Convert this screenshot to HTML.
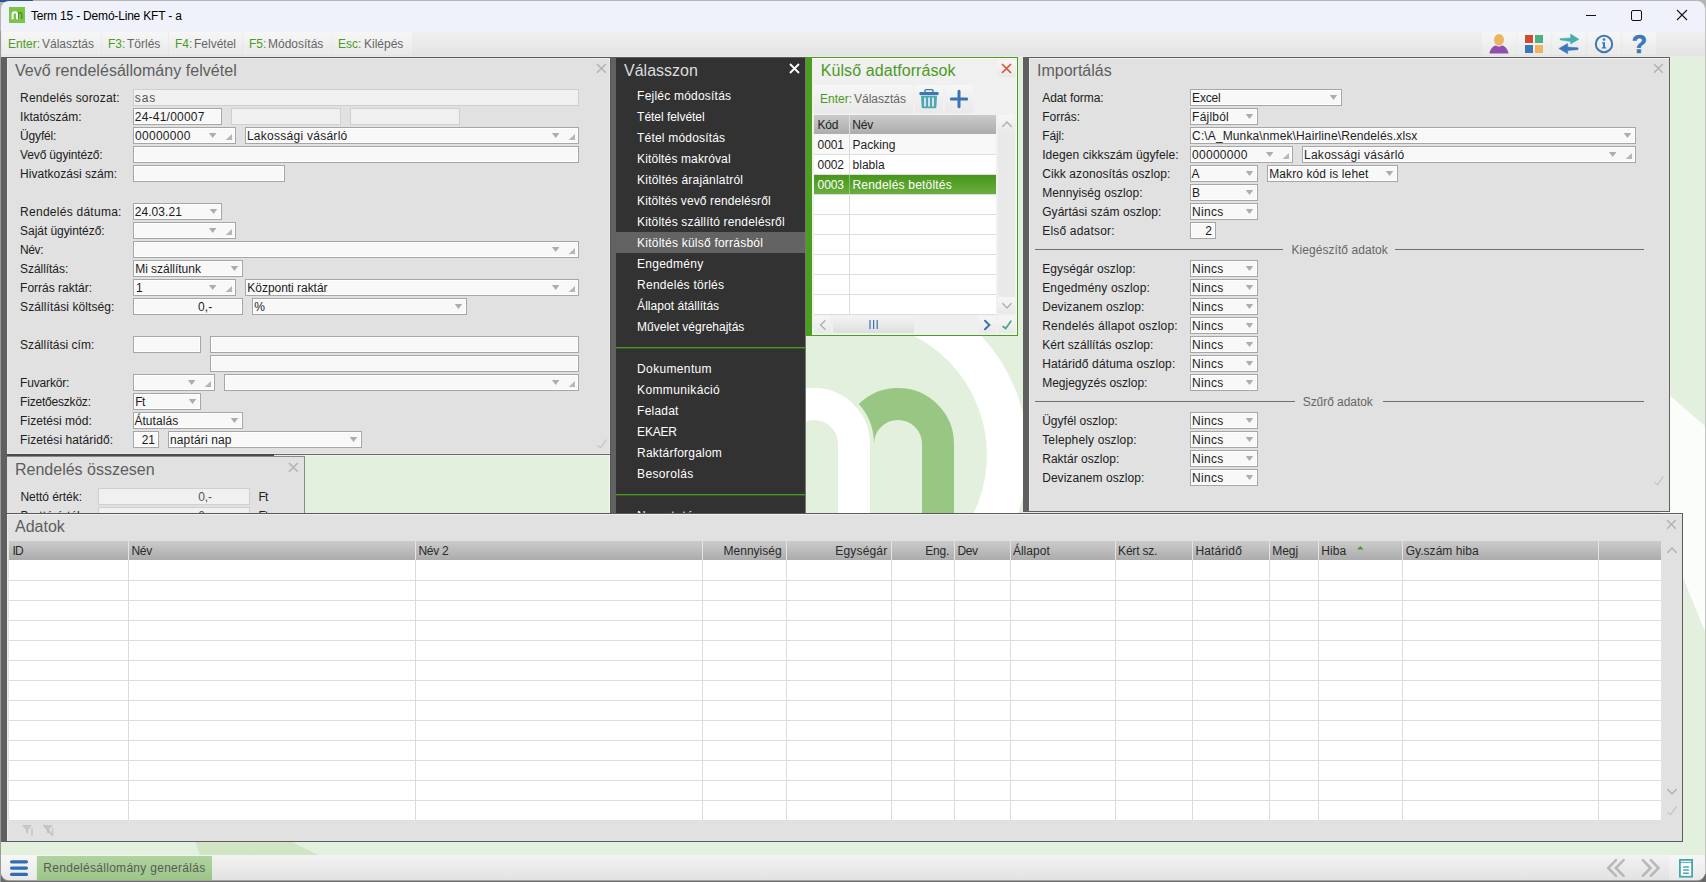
<!DOCTYPE html><html lang="hu"><head><meta charset="utf-8"><title>Term 15 - Demó-Line KFT - a</title><style>
*{box-sizing:border-box;margin:0;padding:0}
html,body{width:1706px;height:882px;overflow:hidden;background:#e4f0de;font-family:"Liberation Sans",Arial,sans-serif;font-size:12px;color:#1a1a1a}
.abs,.l,.i,.c,.pt,.x,.mi,.th,.tb{position:absolute}
.l{white-space:nowrap;line-height:14px;height:14px;letter-spacing:.17px;color:#202020}
.i{height:17px;border:1px solid #a6a6a6;background:#f8f8f8;box-shadow:inset 0 0 0 1px #fff;line-height:17px;padding-left:1px;white-space:nowrap;overflow:hidden;letter-spacing:.17px;color:#1c1c1c}
.i.d{border-color:#cfcfcf;background:#f0f0f0;color:#555;box-shadow:none}
.i.r{text-align:right;padding-right:3px;padding-left:0}
.ar{position:absolute;top:5px;width:7.6px;height:4.9px;background:#adadad;clip-path:polygon(0 0,100% 0,50% 100%)}
.cn{position:absolute;top:5.8px;width:6.8px;height:6.4px;background:#b7b7b7;clip-path:polygon(100% 0,100% 100%,0 100%)}
.pt{font-size:16px;line-height:20px;color:#5e5e5e;white-space:nowrap}
.panel{position:absolute;background:#e1e1e1}
.mi{left:637px;color:#fff;white-space:nowrap;line-height:14px;letter-spacing:.22px}
.sep{position:absolute;height:1px;background:#707070}
.th{top:0;height:20px;line-height:20px;white-space:nowrap;letter-spacing:.1px;color:#2a2a2a}
.k{color:#4b9b20}.v{color:#666}
.tb{top:31px;height:26px;line-height:26px;white-space:nowrap;font-size:12px}
.bt{position:absolute;background:linear-gradient(#f6f6f6,#e9e9e9)}
svg{position:absolute;overflow:visible}
</style></head><body>
<svg style="left:0;top:0" width="1706" height="882" viewBox="0 0 1706 882"><rect width="1706" height="882" fill="#e4f0de"/>
<circle cx="853" cy="455" r="154.5" fill="none" stroke="#fff" stroke-width="41"/>
<path d="M858 444A40 40 0 0 1 938 444V560" fill="none" stroke="#98c783" stroke-width="32"/>
<path d="M774 560V444A40 40 0 0 1 854 444V560" fill="none" stroke="#e4f0de" stroke-width="40"/>
<path d="M774 560V444A40 40 0 0 1 854 444V560" fill="none" stroke="#fff" stroke-width="32"/>
<polygon points="1660,387 1706,427 1706,634 1660,521" fill="#fbfdfa"/>
<polygon points="195,841 290,841 318,855 200,855" fill="#cfe5c4"/>
</svg>
<div class="abs" style="left:0;top:0;width:1706px;height:31px;background:#b4b4b4"></div>
<div class="abs" style="left:0;top:0;width:33px;height:2px;background:#2f5590"></div>
<div class="abs" style="left:1px;top:1px;width:1704px;height:30px;background:#eff2fa;border-radius:8px 8px 0 0"></div>
<svg style="left:9px;top:7px" width="16" height="16"><rect width="16" height="16" fill="#7dc24b"/><path d="M9 12V7.6A1.9 1.9 0 0 1 12.8 7.6V12" fill="none" stroke="#47a01f" stroke-width="1.7"/><path d="M3.6 12.3V7.4A2.2 2.2 0 0 1 8 7.4V12.3" fill="none" stroke="#fff" stroke-width="2"/></svg>
<div class="abs" style="left:31px;top:8px;line-height:16px;white-space:nowrap;color:#000;font-size:12px;letter-spacing:-.19px">Term 15 - Demó-Line KFT - a</div>
<svg style="left:1586px;top:10px" width="102" height="11"><path d="M0 5.5H10" stroke="#111" stroke-width="1"/><rect x="45.5" y="0.5" width="10" height="10" rx="1.5" fill="none" stroke="#111" stroke-width="1"/><path d="M91 0L101 10M101 0L91 10" stroke="#111" stroke-width="1.1"/></svg>
<div class="abs" style="left:1px;top:31px;width:1704px;height:26px;background:linear-gradient(#f0f0f0,#e3e3e3)"></div>
<div class="bt" style="left:2px;top:32px;width:99px;height:23px"></div>
<div class="bt" style="left:102px;top:32px;width:66px;height:23px"></div>
<div class="bt" style="left:169px;top:32px;width:73px;height:23px"></div>
<div class="bt" style="left:243px;top:32px;width:88px;height:23px"></div>
<div class="bt" style="left:332px;top:32px;width:80px;height:23px"></div>
<div class="tb k" style="left:8px">Enter:</div><div class="tb v" style="left:42px">Választás</div>
<div class="tb k" style="left:108px">F3:</div><div class="tb v" style="left:127px">Törlés</div>
<div class="tb k" style="left:175px">F4:</div><div class="tb v" style="left:194px">Felvétel</div>
<div class="tb k" style="left:249px">F5:</div><div class="tb v" style="left:268px">Módosítás</div>
<div class="tb k" style="left:338px">Esc:</div><div class="tb v" style="left:364px">Kilépés</div>
<div class="bt" style="left:1482px;top:32px;width:34px;height:23px"></div>
<div class="bt" style="left:1517px;top:32px;width:34px;height:23px"></div>
<div class="bt" style="left:1552px;top:32px;width:34px;height:23px"></div>
<div class="bt" style="left:1587px;top:32px;width:34px;height:23px"></div>
<div class="bt" style="left:1622px;top:32px;width:34px;height:23px"></div>
<svg style="left:1488px;top:33px" width="22" height="22"><path d="M1.4 20.6C2.4 16 5 13.2 8 12.6C9.6 14 12.4 14 14 12.6C17 13.2 19.6 16 20.6 20.6Z" fill="#8e4fae"/><ellipse cx="11" cy="6.8" rx="5" ry="5.8" fill="#ecb45e"/></svg>
<svg style="left:1525px;top:35px" width="18" height="18"><rect width="8" height="8" fill="#d24a2f"/><rect x="10" width="8" height="8" fill="#4cae87"/><rect y="10" width="8" height="8" fill="#3b78b8"/><rect x="10" y="10" width="8" height="8" fill="#f0b55c"/></svg>
<svg style="left:1558px;top:33px" width="22" height="22"><path d="M2.4 5.5L12.6 5V1L21 6.3L12.6 11V8.6L2.4 6.9Q1.6 6.2 2.4 5.5Z" fill="#45aeb1" stroke="#45aeb1" stroke-width=".5" stroke-linejoin="round"/><path d="M19.8 14.7L9.7 14.1V10.5L0.9 15.5L9.7 20.7V17.5L19.8 16.7Q20.7 15.7 19.8 14.7Z" fill="#3b78b8" stroke="#3b78b8" stroke-width=".5" stroke-linejoin="round"/></svg>
<svg style="left:1594px;top:34px" width="20" height="20"><circle cx="10" cy="10" r="8.2" fill="none" stroke="#3b78b8" stroke-width="2"/><circle cx="10" cy="5.6" r="1.3" fill="#3b78b8"/><path d="M8 8.2H11V13.3H12.2V14.6H7.8V13.3H9V9.5H8Z" fill="#3b78b8"/></svg>
<div class="abs" style="left:1631px;top:31px;width:17px;height:27px;line-height:27px;font-size:25px;font-weight:bold;color:#3b78b8;text-align:center;-webkit-text-stroke:.6px #3b78b8">?</div>
<div class="abs" style="left:1px;top:56px;width:1704px;height:1px;background:#e9e9e9"></div><div class="abs" style="left:1px;top:57px;width:805px;height:1px;background:#5c5c5c"></div>
<div class="abs" style="left:1px;top:58px;width:6px;height:784px;background:#606060"></div>
<div class="panel" style="left:7px;top:58px;width:603px;height:396px;border-right:1px solid #e9e9e9;border-bottom:1px solid #e9e9e9;border-top:1px solid #ebebeb;border-left:1px solid #e9e9e9"></div>
<div class="pt" style="left:15px;top:61px;letter-spacing:.04px">Vevő rendelésállomány felvétel</div>
<svg style="left:597.1px;top:64.1px" width="8.8" height="8.8"><path d="M0 0L8.8 8.8M8.8 0L0 8.8" stroke="#b4b4b4" stroke-width="1.6" fill="none"/></svg>
<svg style="left:596px;top:437.5px" width="12" height="12"><path d="M1.86 7.66L4.62 9.68L10.14 1.95" stroke="#c6c6c6" stroke-width="1.3" fill="none" stroke-linecap="round"/></svg>
<div class="l" style="left:20.1px;top:91px;letter-spacing:0.172px;">Rendelés sorozat:</div>
<div class="l" style="left:20.1px;top:110px;letter-spacing:0.002px;">Iktatószám:</div>
<div class="l" style="left:20.1px;top:129px;letter-spacing:-0.179px;">Ügyfél:</div>
<div class="l" style="left:20.1px;top:148px;letter-spacing:-0.154px;">Vevő ügyintéző:</div>
<div class="l" style="left:20.1px;top:167px;letter-spacing:0.016px;">Hivatkozási szám:</div>
<div class="l" style="left:20.1px;top:205px;letter-spacing:0.262px;">Rendelés dátuma:</div>
<div class="l" style="left:20.1px;top:224px;letter-spacing:-0.058px;">Saját ügyintéző:</div>
<div class="l" style="left:20.1px;top:243px;letter-spacing:-0.408px;">Név:</div>
<div class="l" style="left:20.1px;top:262px;letter-spacing:-0.058px;">Szállítás:</div>
<div class="l" style="left:20.1px;top:281px;letter-spacing:0.0px;">Forrás raktár:</div>
<div class="l" style="left:20.1px;top:300px;letter-spacing:0.092px;">Szállítási költség:</div>
<div class="l" style="left:20.1px;top:338px;letter-spacing:0.014px;">Szállítási cím:</div>
<div class="l" style="left:20.1px;top:376px;letter-spacing:-0.178px;">Fuvarkör:</div>
<div class="l" style="left:20.1px;top:395px;letter-spacing:-0.206px;">Fizetőeszköz:</div>
<div class="l" style="left:20.1px;top:414px;letter-spacing:0.035px;">Fizetési mód:</div>
<div class="l" style="left:20.1px;top:433px;letter-spacing:0.09px;">Fizetési határidő:</div>
<div class="i d" style="left:133px;top:89px;width:446px;"></div>
<div class="l" style="left:134.8px;top:91px;letter-spacing:0.888px;color:#555">sas</div>
<div class="i " style="left:133px;top:108px;width:89px;"></div>
<div class="l" style="left:134.8px;top:110px;letter-spacing:0.223px;color:#1c1c1c">24-41/00007</div>
<div class="i d" style="left:231px;top:108px;width:110px;"></div>
<div class="i d" style="left:350px;top:108px;width:110px;"></div>
<div class="i " style="left:133px;top:127px;width:103px;"><span class="ar" style="left:74.9px"></span><span class="cn" style="left:91.4px"></span></div>
<div class="l" style="left:135.1px;top:129px;letter-spacing:0.261px;color:#1c1c1c">00000000</div>
<div class="i " style="left:245px;top:127px;width:334px;"><span class="ar" style="left:305.9px"></span><span class="cn" style="left:322.4px"></span></div>
<div class="l" style="left:246.9px;top:129px;letter-spacing:0.269px;color:#1c1c1c">Lakossági vásárló</div>
<div class="i " style="left:133px;top:146px;width:446px;"></div>
<div class="i " style="left:133px;top:165px;width:152px;"></div>
<div class="i " style="left:133px;top:203px;width:89px;"><span class="ar" style="left:75.7px"></span></div>
<div class="l" style="left:134.7px;top:205px;letter-spacing:0.079px;color:#1c1c1c">24.03.21</div>
<div class="i " style="left:133px;top:222px;width:103px;"><span class="ar" style="left:74.9px"></span><span class="cn" style="left:91.4px"></span></div>
<div class="i " style="left:133px;top:241px;width:446px;"><span class="ar" style="left:417.9px"></span><span class="cn" style="left:434.4px"></span></div>
<div class="i " style="left:133px;top:260px;width:110px;"><span class="ar" style="left:96.7px"></span></div>
<div class="l" style="left:135.2px;top:262px;letter-spacing:-0.027px;color:#1c1c1c">Mi szállítunk</div>
<div class="i " style="left:133px;top:279px;width:103px;"><span class="ar" style="left:74.9px"></span><span class="cn" style="left:91.4px"></span></div>
<div class="l" style="left:136.0px;top:281px;letter-spacing:-1.825px;color:#1c1c1c">1</div>
<div class="i " style="left:245px;top:279px;width:334px;"><span class="ar" style="left:305.9px"></span><span class="cn" style="left:322.4px"></span></div>
<div class="l" style="left:247.3px;top:281px;letter-spacing:-0.032px;color:#1c1c1c">Központi raktár</div>
<div class="i " style="left:133px;top:298px;width:110px;"></div>
<div class="l" style="left:198.0px;top:300px;letter-spacing:0.1px;color:#1c1c1c">0,-</div>
<div class="i " style="left:252px;top:298px;width:215px;"><span class="ar" style="left:201.7px"></span></div>
<div class="l" style="left:254.3px;top:300px;letter-spacing:-0.625px;color:#1c1c1c">%</div>
<div class="i " style="left:133px;top:336px;width:68px;"></div>
<div class="i " style="left:210px;top:336px;width:369px;"></div>
<div class="i " style="left:210px;top:355px;width:369px;"></div>
<div class="i " style="left:133px;top:374px;width:82px;"><span class="ar" style="left:53.9px"></span><span class="cn" style="left:70.4px"></span></div>
<div class="i " style="left:224px;top:374px;width:355px;"><span class="ar" style="left:326.9px"></span><span class="cn" style="left:343.4px"></span></div>
<div class="i " style="left:133px;top:393px;width:68px;"><span class="ar" style="left:54.7px"></span></div>
<div class="l" style="left:135.2px;top:395px;letter-spacing:-0.425px;color:#1c1c1c">Ft</div>
<div class="i " style="left:133px;top:412px;width:110px;"><span class="ar" style="left:96.7px"></span></div>
<div class="l" style="left:134.4px;top:414px;letter-spacing:0.061px;color:#1c1c1c">Átutalás</div>
<div class="i " style="left:133px;top:431px;width:26px;"></div>
<div class="l" style="left:141.8px;top:433px;letter-spacing:-0.175px;color:#1c1c1c">21</div>
<div class="i " style="left:168px;top:431px;width:194px;"><span class="ar" style="left:180.7px"></span></div>
<div class="l" style="left:169.9px;top:433px;letter-spacing:0.16px;color:#1c1c1c">naptári nap</div>
<div class="abs" style="left:7px;top:454px;width:603px;height:1px;background:#666"></div><div class="abs" style="left:7px;top:454px;width:267px;height:2px;background:#4a4a4a"></div><div class="abs" style="left:609px;top:455px;width:1px;height:58px;background:#f1faec"></div><div class="abs" style="left:305px;top:455px;width:304px;height:1px;background:#eef8e9"></div>
<div class="panel" style="left:7px;top:456px;width:298px;height:57px;border-top:1px solid #8a8a8a;border-right:1px solid #8a8a8a;overflow:hidden">
<div class="pt" style="left:8px;top:3px">Rendelés összesen</div>
<div class="l" style="left:13.4px;top:33px;letter-spacing:-0.036px">Nettó érték:</div><div class="i d" style="left:91px;top:31px;width:152px"></div>
<div class="l" style="left:191.3px;top:33px;letter-spacing:-0.15px;color:#555">0,-</div>
<div class="l" style="left:251.5px;top:33px;letter-spacing:-0.825px">Ft</div>
<div class="l" style="left:13.4px;top:52px;letter-spacing:0.06px">Bruttó érték:</div><div class="i d" style="left:91px;top:50px;width:152px"></div>
<div class="l" style="left:191.3px;top:52px;letter-spacing:-0.15px;color:#555">0,-</div>
<div class="l" style="left:251.5px;top:52px;letter-spacing:-0.825px">Ft</div>
</div>
<svg style="left:289.1px;top:463.1px" width="8.8" height="8.8"><path d="M0 0L8.8 8.8M8.8 0L0 8.8" stroke="#b4b4b4" stroke-width="1.6" fill="none"/></svg>
<div class="abs" style="left:610px;top:58px;width:6px;height:455px;background:#616161;border-left:1px solid #565656"></div>
<div class="abs" style="left:616px;top:58px;width:190px;height:455px;background:#323232;border-right:1px solid #777;overflow:hidden">
<div class="pt" style="left:8px;top:3px;color:#dcdcdc">Válasszon</div>
<div class="abs" style="left:0;top:174px;width:189px;height:21px;background:#636363"></div>
<div class="mi" style="left:21.1px;top:31px;letter-spacing:0.217px">Fejléc módosítás</div>
<div class="mi" style="left:21.1px;top:52px;letter-spacing:-0.038px">Tétel felvétel</div>
<div class="mi" style="left:21.1px;top:73px;letter-spacing:0.188px">Tétel módosítás</div>
<div class="mi" style="left:21.1px;top:94px;letter-spacing:0.133px">Kitöltés makróval</div>
<div class="mi" style="left:21.1px;top:115px;letter-spacing:0.19px">Kitöltés árajánlatról</div>
<div class="mi" style="left:21.1px;top:136px;letter-spacing:0.115px">Kitöltés vevő rendelésről</div>
<div class="mi" style="left:21.1px;top:157px;letter-spacing:0.17px">Kitöltés szállító rendelésről</div>
<div class="mi" style="left:21.1px;top:178px;letter-spacing:0.22px">Kitöltés külső forrásból</div>
<div class="mi" style="left:21.1px;top:199px;letter-spacing:0.25px">Engedmény</div>
<div class="mi" style="left:21.1px;top:220px;letter-spacing:0.252px">Rendelés törlés</div>
<div class="mi" style="left:21.1px;top:241px;letter-spacing:0.039px">Állapot átállítás</div>
<div class="mi" style="left:21.1px;top:262px;letter-spacing:-0.01px">Művelet végrehajtás</div>
<div class="abs" style="left:0;top:289px;width:189px;height:1px;background:#4a9a1e"></div><div class="abs" style="left:0;top:290px;width:189px;height:1px;background:rgba(74,154,30,.35)"></div>
<div class="mi" style="left:21.1px;top:304px;letter-spacing:0.347px">Dokumentum</div>
<div class="mi" style="left:21.1px;top:325px;letter-spacing:0.359px">Kommunikáció</div>
<div class="mi" style="left:21.1px;top:346px;letter-spacing:0.217px">Feladat</div>
<div class="mi" style="left:21.1px;top:367px;letter-spacing:-0.206px">EKAER</div>
<div class="mi" style="left:21.1px;top:388px;letter-spacing:0.208px">Raktárforgalom</div>
<div class="mi" style="left:21.1px;top:409px;letter-spacing:0.353px">Besorolás</div>
<div class="abs" style="left:0;top:436px;width:189px;height:1px;background:#4a9a1e"></div><div class="abs" style="left:0;top:437px;width:189px;height:1px;background:rgba(74,154,30,.35)"></div>
<div class="mi" style="left:21.1px;top:451px;letter-spacing:0.691px">Nyomtatás</div>
</div>
<svg style="left:790.0px;top:64.0px" width="9.0" height="9.0"><path d="M0 0L9.0 9.0M9.0 0L0 9.0" stroke="#fff" stroke-width="1.8" fill="none"/></svg>
<div class="abs" style="left:806px;top:57px;width:212px;height:279px;background:#4c9e1e"></div>
<div class="panel" style="left:812px;top:58px;width:205px;height:277px;background:#f0f0f0;overflow:hidden;box-shadow:inset 0 1px #fbfbfb,inset -1px 0 #f8f8f8">
<div class="pt" style="left:8.7px;top:3px;color:#4b9b20;letter-spacing:0.088px">Külső adatforrások</div>
<div class="bt" style="left:186px;top:2px;width:18px;height:17px"></div>
<div class="bt" style="left:2px;top:27px;width:99px;height:28px"></div>
<div class="abs k" style="left:8px;top:27px;line-height:28px;white-space:nowrap">Enter:</div><div class="abs v" style="left:42px;top:27px;line-height:28px;white-space:nowrap">Választás</div>
<div class="bt" style="left:103px;top:27px;width:28px;height:28px"></div>
<div class="bt" style="left:133px;top:27px;width:28px;height:28px"></div>
<svg style="left:107px;top:30px" width="20" height="21"><path d="M6 4V2.6Q6 1.6 7 1.6H13Q14 1.6 14 2.6V4" fill="none" stroke="#3d76b5" stroke-width="1.4"/><rect x="0.3" y="4" width="19.4" height="3.2" rx="1.4" fill="#3d76b5"/><path d="M2 8H18L17.4 19Q17.3 20.3 16 20.3H4Q2.7 20.3 2.6 19Z" fill="#4fa8b0"/><path d="M6 9.5V18.5M10 9.5V18.5M14 9.5V18.5" stroke="#f3f3f3" stroke-width="1.6"/></svg>
<svg style="left:137px;top:31px" width="20" height="20"><path d="M2.3 10H17.7M10 2.3V17.7" stroke="#3b73b4" stroke-width="3" stroke-linecap="round"/></svg>
<div class="abs" style="left:2px;top:57px;width:182px;height:199px;background:#fff"></div>
<div class="abs" style="left:2px;top:57px;width:182px;height:19px;background:linear-gradient(#cbcbcb,#acacac)"></div>
<div class="abs" style="left:2px;top:76px;width:182px;height:20px;background:#f8f8f8"></div>
<div class="abs" style="left:37px;top:57px;width:1px;height:199px;background:#dcdcdc"></div>
<div class="l" style="left:5.5px;top:60px;letter-spacing:-0.188px;color:#222">Kód</div>
<div class="l" style="left:40.3px;top:60px;letter-spacing:-0.237px;color:#222">Név</div>
<div class="abs" style="left:2px;top:96px;width:182px;height:1px;background:#dedede"></div>
<div class="abs" style="left:2px;top:116px;width:182px;height:1px;background:#dedede"></div>
<div class="abs" style="left:2px;top:136px;width:182px;height:1px;background:#dedede"></div>
<div class="abs" style="left:2px;top:156px;width:182px;height:1px;background:#dedede"></div>
<div class="abs" style="left:2px;top:176px;width:182px;height:1px;background:#dedede"></div>
<div class="abs" style="left:2px;top:196px;width:182px;height:1px;background:#dedede"></div>
<div class="abs" style="left:2px;top:216px;width:182px;height:1px;background:#dedede"></div>
<div class="abs" style="left:2px;top:236px;width:182px;height:1px;background:#dedede"></div>
<div class="abs" style="left:2px;top:256px;width:182px;height:1px;background:#dedede"></div>
<div class="abs" style="left:2px;top:117px;width:182px;height:19px;background:linear-gradient(#47961b,#6aae40)"></div>
<div class="abs" style="left:37px;top:117px;width:1px;height:19px;background:#8cc46a"></div>
<div class="l" style="left:5.6px;top:80px;letter-spacing:-0.117px;color:#222">0001</div>
<div class="l" style="left:40.5px;top:80px;letter-spacing:0.042px;color:#222">Packing</div>
<div class="l" style="left:5.6px;top:100px;letter-spacing:-0.117px;color:#222">0002</div>
<div class="l" style="left:40.5px;top:100px;letter-spacing:0.035px;color:#222">blabla</div>
<div class="l" style="left:5.6px;top:120px;letter-spacing:-0.117px;color:#fff">0003</div>
<div class="l" style="left:40.5px;top:120px;letter-spacing:0.192px;color:#fff">Rendelés betöltés</div>
<div class="abs" style="left:186px;top:57px;width:17px;height:199px;background:#e9e9e9"></div>
<div class="bt" style="left:186px;top:57px;width:17px;height:18px"></div>
<div class="bt" style="left:186px;top:239px;width:17px;height:17px"></div>
<div class="abs" style="left:2px;top:258px;width:182px;height:17px;background:#efefef"></div>
<div class="bt" style="left:2px;top:258px;width:17px;height:17px"></div>
<div class="abs" style="left:21px;top:258px;width:81px;height:17px;background:linear-gradient(#f4f4f4,#dedede)"></div>
<div class="bt" style="left:167px;top:258px;width:17px;height:17px"></div>
<div class="bt" style="left:186px;top:258px;width:17px;height:17px"></div>
<svg style="left:57px;top:262px" width="10" height="10"><path d="M1 0V9M4.6 0V9M8.2 0V9" stroke="#3b73b4" stroke-width="1.2"/></svg>
</div>
<svg style="left:1002.0px;top:64.0px" width="9.0" height="9.0"><path d="M0 0L9.0 9.0M9.0 0L0 9.0" stroke="#d9553a" stroke-width="1.7" fill="none"/></svg>
<svg style="left:1006.5px;top:124px" width="1" height="1"><path d="M-4.3 2.4L0 -2L4.3 2.4" stroke="#b0b0b0" stroke-width="1.4" fill="none" stroke-linecap="round"/></svg>
<svg style="left:1006.5px;top:305.6px" width="1" height="1"><path d="M-4.3 -2.4L0 2L4.3 -2.4" stroke="#b0b0b0" stroke-width="1.4" fill="none" stroke-linecap="round"/></svg>
<svg style="left:822.8px;top:324.7px" width="1" height="1"><path d="M2 -4.3L-2.4 0L2 4.3" stroke="#b0b0b0" stroke-width="1.4" fill="none" stroke-linecap="round"/></svg>
<svg style="left:987px;top:324.7px" width="1" height="1"><path d="M-2 -4.3L2.4 0L-2 4.3" stroke="#3b73b4" stroke-width="2" fill="none" stroke-linecap="round"/></svg>
<svg style="left:1000.5px;top:318.6px" width="12" height="12"><path d="M2.13 7.55L4.71 9.44L9.87 2.22" stroke="#4aa77a" stroke-width="1.7" fill="none" stroke-linecap="round"/></svg>
<div class="abs" style="left:1023px;top:57px;width:647px;height:455px;background:#606060"></div>
<div class="panel" style="left:1029px;top:58px;width:640px;height:453px;border-top:1px solid #f2f2f2;border-left:1px solid #ececec"></div>
<div class="pt" style="left:1037px;top:61px;">Importálás</div>
<svg style="left:1654.1px;top:64.1px" width="8.8" height="8.8"><path d="M0 0L8.8 8.8M8.8 0L0 8.8" stroke="#b4b4b4" stroke-width="1.6" fill="none"/></svg>
<svg style="left:1652.5px;top:475px" width="12" height="12"><path d="M1.86 7.66L4.62 9.68L10.14 1.95" stroke="#c6c6c6" stroke-width="1.3" fill="none" stroke-linecap="round"/></svg>
<div class="l" style="left:1042.2px;top:91px;letter-spacing:-0.06px;">Adat forma:</div>
<div class="l" style="left:1042.2px;top:110px;letter-spacing:-0.017px;">Forrás:</div>
<div class="l" style="left:1042.2px;top:129px;letter-spacing:-0.106px;">Fájl:</div>
<div class="l" style="left:1042.2px;top:148px;letter-spacing:0.067px;">Idegen cikkszám ügyfele:</div>
<div class="l" style="left:1042.2px;top:167px;letter-spacing:0.091px;">Cikk azonosítás oszlop:</div>
<div class="l" style="left:1042.2px;top:186px;letter-spacing:0.064px;">Mennyiség oszlop:</div>
<div class="l" style="left:1042.2px;top:205px;letter-spacing:0.055px;">Gyártási szám oszlop:</div>
<div class="l" style="left:1042.2px;top:224px;letter-spacing:0.2px;">Első adatsor:</div>
<div class="l" style="left:1042.2px;top:262px;letter-spacing:0.087px;">Egységár oszlop:</div>
<div class="l" style="left:1042.2px;top:281px;letter-spacing:0.139px;">Engedmény oszlop:</div>
<div class="l" style="left:1042.2px;top:300px;letter-spacing:0.045px;">Devizanem oszlop:</div>
<div class="l" style="left:1042.2px;top:319px;letter-spacing:0.207px;">Rendelés állapot oszlop:</div>
<div class="l" style="left:1042.2px;top:338px;letter-spacing:0.057px;">Kért szállítás oszlop:</div>
<div class="l" style="left:1042.2px;top:357px;letter-spacing:0.135px;">Határidő dátuma oszlop:</div>
<div class="l" style="left:1042.2px;top:376px;letter-spacing:-0.01px;">Megjegyzés oszlop:</div>
<div class="l" style="left:1042.2px;top:414px;letter-spacing:0.01px;">Ügyfél oszlop:</div>
<div class="l" style="left:1042.2px;top:433px;letter-spacing:0.144px;">Telephely oszlop:</div>
<div class="l" style="left:1042.2px;top:452px;letter-spacing:0.027px;">Raktár oszlop:</div>
<div class="l" style="left:1042.2px;top:471px;letter-spacing:0.045px;">Devizanem oszlop:</div>
<div class="i " style="left:1190px;top:89px;width:152px;"><span class="ar" style="left:138.7px"></span></div>
<div class="l" style="left:1192.1px;top:91px;letter-spacing:-0.219px;color:#1c1c1c">Excel</div>
<div class="i " style="left:1190px;top:108px;width:68px;"><span class="ar" style="left:54.7px"></span></div>
<div class="l" style="left:1192.1px;top:110px;letter-spacing:0.221px;color:#1c1c1c">Fájlból</div>
<div class="i " style="left:1190px;top:127px;width:446px;"><span class="ar" style="left:432.7px"></span></div>
<div class="l" style="left:1192.1px;top:129px;letter-spacing:0.12px;color:#1c1c1c">C:\A_Munka\nmek\Hairline\Rendelés.xlsx</div>
<div class="i " style="left:1190px;top:146px;width:103px;"><span class="ar" style="left:74.9px"></span><span class="cn" style="left:91.4px"></span></div>
<div class="l" style="left:1192.1px;top:148px;letter-spacing:0.261px;color:#1c1c1c">00000000</div>
<div class="i " style="left:1302px;top:146px;width:334px;"><span class="ar" style="left:305.9px"></span><span class="cn" style="left:322.4px"></span></div>
<div class="l" style="left:1304.0px;top:148px;letter-spacing:0.263px;color:#1c1c1c">Lakossági vásárló</div>
<div class="i " style="left:1190px;top:165px;width:68px;"><span class="ar" style="left:54.7px"></span></div>
<div class="l" style="left:1191.6px;top:167px;letter-spacing:0.0px;color:#1c1c1c">A</div>
<div class="i " style="left:1267px;top:165px;width:131px;"><span class="ar" style="left:117.7px"></span></div>
<div class="l" style="left:1269.2px;top:167px;letter-spacing:0.101px;color:#1c1c1c">Makro kód is lehet</div>
<div class="i " style="left:1190px;top:184px;width:68px;"><span class="ar" style="left:54.7px"></span></div>
<div class="l" style="left:1192.1px;top:186px;letter-spacing:-0.5px;color:#1c1c1c">B</div>
<div class="i " style="left:1190px;top:203px;width:68px;"><span class="ar" style="left:54.7px"></span></div>
<div class="l" style="left:1192.1px;top:205px;letter-spacing:0.275px;color:#1c1c1c">Nincs</div>
<div class="i " style="left:1190px;top:222px;width:26px;"></div>
<div class="l" style="left:1205.2px;top:224px;letter-spacing:0.975px;color:#1c1c1c">2</div>
<div class="i " style="left:1190px;top:260px;width:68px;"><span class="ar" style="left:54.7px"></span></div>
<div class="l" style="left:1192.1px;top:262px;letter-spacing:0.275px;color:#1c1c1c">Nincs</div>
<div class="i " style="left:1190px;top:279px;width:68px;"><span class="ar" style="left:54.7px"></span></div>
<div class="l" style="left:1192.1px;top:281px;letter-spacing:0.275px;color:#1c1c1c">Nincs</div>
<div class="i " style="left:1190px;top:298px;width:68px;"><span class="ar" style="left:54.7px"></span></div>
<div class="l" style="left:1192.1px;top:300px;letter-spacing:0.275px;color:#1c1c1c">Nincs</div>
<div class="i " style="left:1190px;top:317px;width:68px;"><span class="ar" style="left:54.7px"></span></div>
<div class="l" style="left:1192.1px;top:319px;letter-spacing:0.275px;color:#1c1c1c">Nincs</div>
<div class="i " style="left:1190px;top:336px;width:68px;"><span class="ar" style="left:54.7px"></span></div>
<div class="l" style="left:1192.1px;top:338px;letter-spacing:0.275px;color:#1c1c1c">Nincs</div>
<div class="i " style="left:1190px;top:355px;width:68px;"><span class="ar" style="left:54.7px"></span></div>
<div class="l" style="left:1192.1px;top:357px;letter-spacing:0.275px;color:#1c1c1c">Nincs</div>
<div class="i " style="left:1190px;top:374px;width:68px;"><span class="ar" style="left:54.7px"></span></div>
<div class="l" style="left:1192.1px;top:376px;letter-spacing:0.275px;color:#1c1c1c">Nincs</div>
<div class="i " style="left:1190px;top:412px;width:68px;"><span class="ar" style="left:54.7px"></span></div>
<div class="l" style="left:1192.1px;top:414px;letter-spacing:0.275px;color:#1c1c1c">Nincs</div>
<div class="i " style="left:1190px;top:431px;width:68px;"><span class="ar" style="left:54.7px"></span></div>
<div class="l" style="left:1192.1px;top:433px;letter-spacing:0.275px;color:#1c1c1c">Nincs</div>
<div class="i " style="left:1190px;top:450px;width:68px;"><span class="ar" style="left:54.7px"></span></div>
<div class="l" style="left:1192.1px;top:452px;letter-spacing:0.275px;color:#1c1c1c">Nincs</div>
<div class="i " style="left:1190px;top:469px;width:68px;"><span class="ar" style="left:54.7px"></span></div>
<div class="l" style="left:1192.1px;top:471px;letter-spacing:0.275px;color:#1c1c1c">Nincs</div>
<div class="sep" style="left:1035px;top:249px;width:248px"></div><div class="sep" style="left:1395px;top:249px;width:249px"></div>
<div class="l" style="left:1291.4px;top:243px;letter-spacing:0.062px;color:#666">Kiegészítő adatok</div>
<div class="sep" style="left:1035px;top:401px;width:260px"></div><div class="sep" style="left:1383px;top:401px;width:261px"></div>
<div class="l" style="left:1302.7px;top:395px;letter-spacing:-0.052px;color:#666">Szűrő adatok</div>
<div class="abs" style="left:7px;top:513px;width:1676px;height:329px;background:#5a5a5a"></div>
<div class="panel" style="left:7px;top:514px;width:1675px;height:327px;border-top:1px solid #f0f0f0;border-left:1px solid #ececec"></div>
<div class="pt" style="left:15px;top:517px;">Adatok</div>
<svg style="left:1667.1px;top:520.1px" width="8.8" height="8.8"><path d="M0 0L8.8 8.8M8.8 0L0 8.8" stroke="#b4b4b4" stroke-width="1.6" fill="none"/></svg>
<svg style="left:1671.5px;top:549.5px" width="1" height="1"><path d="M-4.3 2.4L0 -2L4.3 2.4" stroke="#b0b0b0" stroke-width="1.4" fill="none" stroke-linecap="round"/></svg>
<svg style="left:1671.5px;top:791.5px" width="1" height="1"><path d="M-4.3 -2.4L0 2L4.3 -2.4" stroke="#b0b0b0" stroke-width="1.4" fill="none" stroke-linecap="round"/></svg>
<svg style="left:1665.5px;top:805px" width="12" height="12"><path d="M1.86 7.66L4.62 9.68L10.14 1.95" stroke="#c6c6c6" stroke-width="1.3" fill="none" stroke-linecap="round"/></svg>
<div class="abs" style="left:9px;top:541px;width:1652px;height:279px;background:#fff"></div>
<div class="abs" style="left:9px;top:541px;width:1652px;height:19px;background:linear-gradient(#cbcbcb,#acacac)"></div>
<div class="l" style="left:12.4px;top:544px;letter-spacing:-0.7px;color:#2a2a2a">ID</div>
<div class="abs" style="left:128px;top:541px;width:1px;height:19px;background:#e4e4e4"></div>
<div class="abs" style="left:128px;top:560px;width:1px;height:260px;background:#dcdcdc"></div>
<div class="l" style="left:131.5px;top:544px;letter-spacing:-0.338px;color:#2a2a2a">Név</div>
<div class="abs" style="left:415px;top:541px;width:1px;height:19px;background:#e4e4e4"></div>
<div class="abs" style="left:415px;top:560px;width:1px;height:260px;background:#dcdcdc"></div>
<div class="l" style="left:418.4px;top:544px;letter-spacing:-0.294px;color:#2a2a2a">Név 2</div>
<div class="abs" style="left:702px;top:541px;width:1px;height:19px;background:#e4e4e4"></div>
<div class="abs" style="left:702px;top:560px;width:1px;height:260px;background:#dcdcdc"></div>
<div class="l" style="left:723.5px;top:544px;letter-spacing:0.013px;color:#2a2a2a">Mennyiség</div>
<div class="abs" style="left:786px;top:541px;width:1px;height:19px;background:#e4e4e4"></div>
<div class="abs" style="left:786px;top:560px;width:1px;height:260px;background:#dcdcdc"></div>
<div class="l" style="left:835.2px;top:544px;letter-spacing:0.193px;color:#2a2a2a">Egységár</div>
<div class="abs" style="left:891px;top:541px;width:1px;height:19px;background:#e4e4e4"></div>
<div class="abs" style="left:891px;top:560px;width:1px;height:260px;background:#dcdcdc"></div>
<div class="l" style="left:925.2px;top:544px;letter-spacing:-0.208px;color:#2a2a2a">Eng.</div>
<div class="abs" style="left:954px;top:541px;width:1px;height:19px;background:#e4e4e4"></div>
<div class="abs" style="left:954px;top:560px;width:1px;height:260px;background:#dcdcdc"></div>
<div class="l" style="left:957.5px;top:544px;letter-spacing:-0.387px;color:#2a2a2a">Dev</div>
<div class="abs" style="left:1010px;top:541px;width:1px;height:19px;background:#e4e4e4"></div>
<div class="abs" style="left:1010px;top:560px;width:1px;height:260px;background:#dcdcdc"></div>
<div class="l" style="left:1012.9px;top:544px;letter-spacing:0.025px;color:#2a2a2a">Állapot</div>
<div class="abs" style="left:1115px;top:541px;width:1px;height:19px;background:#e4e4e4"></div>
<div class="abs" style="left:1115px;top:560px;width:1px;height:260px;background:#dcdcdc"></div>
<div class="l" style="left:1118.1px;top:544px;letter-spacing:-0.204px;color:#2a2a2a">Kért sz.</div>
<div class="abs" style="left:1192px;top:541px;width:1px;height:19px;background:#e4e4e4"></div>
<div class="abs" style="left:1192px;top:560px;width:1px;height:260px;background:#dcdcdc"></div>
<div class="l" style="left:1195.4px;top:544px;letter-spacing:0.161px;color:#2a2a2a">Határidő</div>
<div class="abs" style="left:1269px;top:541px;width:1px;height:19px;background:#e4e4e4"></div>
<div class="abs" style="left:1269px;top:560px;width:1px;height:260px;background:#dcdcdc"></div>
<div class="l" style="left:1272.3px;top:544px;letter-spacing:-0.067px;color:#2a2a2a">Megj</div>
<div class="abs" style="left:1318px;top:541px;width:1px;height:19px;background:#e4e4e4"></div>
<div class="abs" style="left:1318px;top:560px;width:1px;height:260px;background:#dcdcdc"></div>
<div class="l" style="left:1321.3px;top:544px;letter-spacing:0.083px;color:#2a2a2a">Hiba</div>
<div class="abs" style="left:1402px;top:541px;width:1px;height:19px;background:#e4e4e4"></div>
<div class="abs" style="left:1402px;top:560px;width:1px;height:260px;background:#dcdcdc"></div>
<div class="l" style="left:1405.7px;top:544px;letter-spacing:0.036px;color:#2a2a2a">Gy.szám hiba</div>
<div class="abs" style="left:1598px;top:541px;width:1px;height:19px;background:#e4e4e4"></div>
<div class="abs" style="left:1598px;top:560px;width:1px;height:260px;background:#dcdcdc"></div>
<div class="abs" style="left:9px;top:580px;width:1652px;height:1px;background:#dedede"></div>
<div class="abs" style="left:9px;top:600px;width:1652px;height:1px;background:#dedede"></div>
<div class="abs" style="left:9px;top:620px;width:1652px;height:1px;background:#dedede"></div>
<div class="abs" style="left:9px;top:640px;width:1652px;height:1px;background:#dedede"></div>
<div class="abs" style="left:9px;top:660px;width:1652px;height:1px;background:#dedede"></div>
<div class="abs" style="left:9px;top:680px;width:1652px;height:1px;background:#dedede"></div>
<div class="abs" style="left:9px;top:700px;width:1652px;height:1px;background:#dedede"></div>
<div class="abs" style="left:9px;top:720px;width:1652px;height:1px;background:#dedede"></div>
<div class="abs" style="left:9px;top:740px;width:1652px;height:1px;background:#dedede"></div>
<div class="abs" style="left:9px;top:760px;width:1652px;height:1px;background:#dedede"></div>
<div class="abs" style="left:9px;top:780px;width:1652px;height:1px;background:#dedede"></div>
<div class="abs" style="left:9px;top:800px;width:1652px;height:1px;background:#dedede"></div>
<div class="abs" style="left:9px;top:820px;width:1652px;height:1px;background:#dedede"></div>
<svg style="left:1357px;top:545.6px" width="7" height="4"><path d="M0 3.6L3.3 0L6.6 3.6Z" fill="#4b9b20"/></svg>
<div class="abs" style="left:0;top:855px;width:1706px;height:27px;background:#6a6a6a"></div><div class="abs" style="left:1px;top:855px;width:1704px;height:26px;background:#a4a4a4;border-radius:0 0 8px 8px"></div>
<div class="abs" style="left:1px;top:855px;width:1704px;height:25px;background:linear-gradient(#f2f2f2,#e2e2e2);border-radius:0 0 8px 8px"></div><div class="bt" style="left:1px;top:855px;width:35px;height:25px;border-radius:0 0 0 8px"></div>
<div class="abs" style="left:37px;top:856px;width:175px;height:24px;background:linear-gradient(#b0d3a0,#9cc687)"></div>
<div class="l" style="left:43.3px;top:861px;letter-spacing:0.286px;color:#5a5a5a">Rendelésállomány generálás</div>
<svg style="left:9px;top:859px" width="20" height="18"><path d="M2.6 2.8H17.4M2.6 9.1H17.4M2.6 15.4H17.4" stroke="#2f6db5" stroke-width="3.3" stroke-linecap="round"/></svg>
<svg style="left:21px;top:824px" width="34" height="13"><path d="M1 1H11L7.2 5.6V9.6L4.8 8.4V5.6Z" fill="#c6c6c6"/><path d="M11 4.4V11.8" stroke="#c6c6c6" stroke-width="1.6"/><path d="M22 1H32L28.2 5.6V9.6L25.8 8.4V5.6Z" fill="#c6c6c6"/><path d="M22.5 0.8L31.6 11.6" stroke="#c0c0c0" stroke-width="1.5"/><path d="M31.6 4.4V11.8" stroke="#c6c6c6" stroke-width="1.4"/></svg>
<svg style="left:1606px;top:858px" width="60" height="20"><path d="M10 2.2L2.2 10L10 17.8M17.6 2.2L9.8 10L17.6 17.8" fill="none" stroke="#b7b7b7" stroke-width="2.5" stroke-linecap="round"/><path d="M36.8 2.2L44.6 10L36.8 17.8M44.8 2.2L52.6 10L44.8 17.8" fill="none" stroke="#b7b7b7" stroke-width="2.5" stroke-linecap="round"/></svg>
<div class="bt" style="left:1669px;top:855px;width:36px;height:25px;border-radius:0 0 8px 0"></div>
<svg style="left:1679px;top:858.5px" width="14" height="19"><rect x="0.9" y="0.9" width="12.2" height="16.8" fill="#fbfbfb" stroke="#47a5ae" stroke-width="1.8"/><path d="M1 3.4H13" stroke="#47a5ae" stroke-width="0.9"/><path d="M4.1 8H9.9M4.1 11.1H9.9M4.1 14.3H9.9" stroke="#47a5ae" stroke-width="1.5"/></svg>
<div class="abs" style="left:0;top:31px;width:1px;height:851px;background:#9a9a9a"></div>
<div class="abs" style="left:1705px;top:8px;width:1px;height:866px;background:#c4c4c4"></div>
</body></html>
